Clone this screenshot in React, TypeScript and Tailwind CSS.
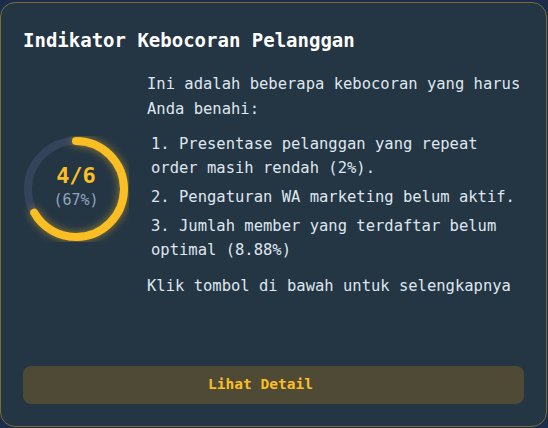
const items = [
  'Presentase pelanggan yang repeat order masih rendah (2%).',
  'Pengaturan WA marketing belum aktif.',
  'Jumlah member yang terdaftar belum optimal (8.88%)',
]

const Ring = ({ done, total }: { done: number; total: number }) => {
  const r = 48
  const c = 2 * Math.PI * r
  const pct = Math.round((done / total) * 100)
  return (
    <div className="relative w-[106px] h-[106px] shrink-0 mt-[6px]">
      <svg width="106" height="106" viewBox="0 0 106 106" className="-rotate-90">
        <circle cx="53" cy="53" r={r} fill="none" stroke="#33435a" strokeWidth="8" />
        <circle
          cx="53"
          cy="53"
          r={r}
          fill="none"
          stroke="#fbbf24"
          strokeWidth="8"
          strokeLinecap="round"
          strokeDasharray={`${(c * done) / total} ${c}`}
          style={{ filter: 'drop-shadow(0 0 4px rgba(251,191,36,0.55))' }}
        />
      </svg>
      <div className="absolute inset-0 flex flex-col items-center justify-center pb-[5px]">
        <div className="text-[22px] leading-[27px] font-bold text-[#fbbf24]">{`${done}/${total}`}</div>
        <div className="text-[15px] leading-[22px] text-[#8ea4bd]">{`(${pct}%)`}</div>
      </div>
    </div>
  )
}

export default function App() {
  return (
    <div
      className="w-[548px] h-[428px] bg-[#1b2d4b] pt-[2px]"
      style={{ fontFamily: '"DejaVu Sans Mono", "Liberation Mono", monospace' }}
    >
      <div className="h-[425px] w-[547px] rounded-[15px] border border-[#7d6b33] bg-[#243544] px-[22px] pt-[24px] pb-[22px] flex flex-col">
        <h2 className="text-[19px] leading-[26px] font-bold text-white">Indikator Kebocoran Pelanggan</h2>

        <div className="mt-[19px] flex items-center gap-[18px]">
          <Ring done={4} total={6} />
          <div className="text-[15.5px] leading-[25px] text-[#dfe6ee]">
            <p>Ini adalah beberapa kebocoran yang harus Anda benahi:</p>
            <ol className="mt-[10px] pl-[4px] flex flex-col gap-[5px]">
              {items.map((t, i) => (
                <li key={i} className="leading-[24px]">{`${i + 1}. ${t}`}</li>
              ))}
            </ol>
            <p className="mt-[12px]">Klik tombol di bawah untuk selengkapnya</p>
          </div>
        </div>

        <button className="mt-auto h-[38px] w-full rounded-[8px] bg-[#4e4a36] pr-[26px] text-[14.5px] font-bold text-[#fbbf24]">
          Lihat Detail
        </button>
      </div>
    </div>
  )
}
